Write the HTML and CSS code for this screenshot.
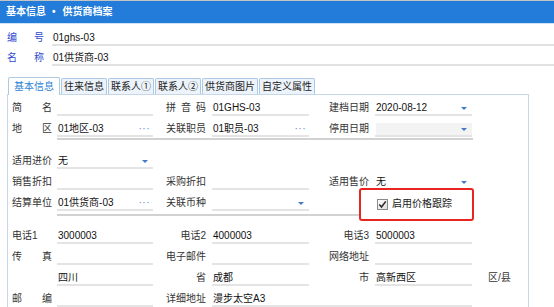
FILE: index.html
```html
<!DOCTYPE html>
<html lang="zh-CN">
<head>
    <meta charset="UTF-8">
    <meta name="viewport" content="width=device-width, initial-scale=1.0">
    <title>供货商档案</title>
    <link rel="stylesheet" href="styles.css">
</head>
<body>
    <div class="titlebar">基本信息<span class="dot">•</span>供货商档案</div>

    <div class="head">
        <div class="head-row"><span class="head-label">编 号</span><span class="head-value">01ghs-03</span></div>
        <div class="head-row"><span class="head-label">名 称</span><span class="head-value">01供货商-03</span></div>
    </div>

    <div class="tabs">
        <div class="tab active">基本信息</div>
        <div class="tab">往来信息</div>
        <div class="tab">联系人①</div>
        <div class="tab">联系人②</div>
        <div class="tab">供货商图片</div>
        <div class="tab">自定义属性</div>
    </div>

    <div class="panel">
        <!-- 基本 -->
        <div class="form">
            <div class="lbl j">简 名</div><div class="fld"></div>
            <div class="lbl c3 j">拼 音 码</div><div class="fld">01GHS-03</div>
            <div class="lbl c5">建档日期</div><div class="fld">2020-08-12<i class="arrow"></i></div>
            <div></div>

            <div class="lbl j">地 区</div><div class="fld">01地区-03<i class="more">···</i></div>
            <div class="lbl c3">关联职员</div><div class="fld">01职员-03<i class="more">···</i></div>
            <div class="lbl c5">停用日期</div><div class="fld off"><i class="arrow"></i></div>
            <div></div>
        </div>
        <div class="sep first"></div>

        <!-- 价格 -->
        <div class="form">
            <div class="lbl">适用进价</div><div class="fld">无<i class="arrow"></i></div>
            <div></div><div></div><div></div><div></div><div></div>

            <div class="lbl">销售折扣</div><div class="fld"></div>
            <div class="lbl c3">采购折扣</div><div class="fld"></div>
            <div class="lbl c5">适用售价</div><div class="fld">无<i class="arrow"></i></div>
            <div></div>

            <div class="lbl">结算单位</div><div class="fld">01供货商-03<i class="more">···</i></div>
            <div class="lbl c3">关联币种</div><div class="fld"><i class="arrow"></i></div>
            <div></div>
            <div class="track">
                <svg class="box" width="11" height="11" viewBox="0 0 11 11">
                    <defs>
                        <linearGradient id="cb" x1="0" y1="0" x2="1" y2="1">
                            <stop offset="0" stop-color="#ffffff"/>
                            <stop offset="1" stop-color="#dcdcdc"/>
                        </linearGradient>
                    </defs>
                    <rect x="0.5" y="0.5" width="10" height="10" fill="url(#cb)" stroke="#8a8a8a"/>
                    <path d="M2.3 5.6 L4.5 8 L8.8 2.4" fill="none" stroke="#262626" stroke-width="1.5"/>
                </svg>
                <span>启用价格跟踪</span>
            </div>
            <div></div>
        </div>
        <div class="sep second"></div>

        <!-- 联系 -->
        <div class="form">
            <div class="lbl">电话1</div><div class="fld">3000003</div>
            <div class="lbl c3 r">电话2</div><div class="fld">4000003</div>
            <div class="lbl c5 r">电话3</div><div class="fld">5000003</div>
            <div></div>

            <div class="lbl j">传 真</div><div class="fld"></div>
            <div class="lbl c3 r">电子邮件</div><div class="fld"></div>
            <div class="lbl c5 r">网络地址</div><div class="fld"></div>
            <div></div>

            <div></div><div class="fld">四川</div>
            <div class="lbl c3 r">省</div><div class="fld">成都</div>
            <div class="lbl c5 r">市</div><div class="fld">高新西区</div>
            <div class="lbl c7">区/县</div>

            <div class="lbl j">邮 编</div><div class="fld"></div>
            <div class="lbl c3 r">详细地址</div><div class="fld wide">漫步太空A3</div>
            <div></div>
        </div>
    </div>
</body>
</html>
```

FILE: styles.css
```css
html, body {
    overflow: hidden;
}
body {
    margin: 0;
    font-family: "Liberation Sans", "Noto Sans CJK SC", sans-serif;
    font-size: 10px;
    color: #222;
    background-color: #fff;
}
.titlebar {
    height: 22px;
    line-height: 22px;
    padding-left: 6px;
    border-top: 1px solid #c4c4c4;
    border-bottom: 1px solid #cfe3f4;
    background-color: #237cd9;
    color: #fff;
    font-weight: bold;
}
.titlebar .dot {
    margin: 0 7px 0 6px;
}
.head {
    padding: 2px 0 0 7px;
}
.head-row {
    display: flex;
    height: 20px;
}
.head-label {
    width: 37px;
    margin-right: 8px;
    padding-top: 6px;
    line-height: 12px;
    color: #2f4ad0;
    text-align: justify;
    text-align-last: justify;
}
.head-value {
    flex: 1;
    padding: 6px 0 0 1px;
    line-height: 12px;
    border-bottom: 2px solid #e2e2e2;
    color: #111;
}
.tabs {
    display: flex;
    align-items: flex-end;
    gap: 1px;
    height: 16px;
    margin: 12px 0 0 8px;
}
.tab {
    height: 16px;
    box-sizing: border-box;
    padding: 0 2px;
    border: 1px solid #aecae3;
    border-bottom: 0;
    border-radius: 2px 2px 0 0;
    background-color: #ecf3fa;
    line-height: 15px;
}
.tab.active {
    position: relative;
    z-index: 1;
    height: 18px;
    margin-bottom: -1px;
    padding: 0 5px;
    background-color: #fff;
    color: #2c7fd4;
    line-height: 17px;
}
.panel {
    width: 522px;
    height: 213px;
    margin-left: 7px;
    box-sizing: border-box;
    border: 1px solid #c7d7e7;
    border-bottom: 0;
    overflow: hidden;
}
.form {
    display: grid;
    grid-template-columns: 45px 96px 59px 97px 66px 97px 1fr;
    grid-auto-rows: 21px;
    padding-left: 4px;
}
.lbl, .fld, .track {
    box-sizing: border-box;
    padding-top: 7px;
    line-height: 12px;
    white-space: nowrap;
}
.lbl {
    padding-right: 5px;
    color: #333;
}
.lbl.c3 {
    padding-left: 13px;
    padding-right: 6px;
}
.lbl.c5 {
    padding-left: 20px;
    padding-right: 6px;
}
.lbl.c7 {
    padding-left: 16px;
}
.lbl.r {
    text-align: right;
}
.lbl.j {
    text-align: justify;
    text-align-last: justify;
}
.fld {
    display: flex;
    align-items: center;
    padding-left: 1px;
    border-bottom: 2px solid #e4e4e4;
    color: #111;
}
.fld.off {
    background-color: #f3f3f3;
    background-clip: content-box;
}
.fld.wide {
    grid-column: span 3;
}
.fld .arrow {
    width: 0;
    height: 0;
    margin-left: auto;
    margin-right: 5px;
    border-left: 3px solid transparent;
    border-right: 3px solid transparent;
    border-top: 3px solid #4477c6;
}
.fld .more {
    margin-left: auto;
    margin-right: 3px;
    font-style: normal;
    color: #5a86cc;
    letter-spacing: 0.5px;
}
.sep {
    width: 416px;
    height: 2px;
    margin-left: 49px;
    background-color: #d2d2d2;
}
.sep.first {
    margin-top: 1px;
    margin-bottom: 8px;
}
.sep.second {
    margin-top: 3px;
    margin-bottom: 7px;
}
.track {
    position: relative;
    display: flex;
    align-items: center;
    padding-left: 2px;
    color: #222;
}
.track::before {
    content: "";
    position: absolute;
    left: -16px;
    right: -2px;
    top: -2px;
    bottom: -10px;
    border: 2px solid #e8261f;
    border-radius: 3px;
    background-color: #fff;
    z-index: 0;
}
.track .box, .track span {
    position: relative;
    z-index: 1;
}
.track .box {
    margin-right: 4px;
}
```
